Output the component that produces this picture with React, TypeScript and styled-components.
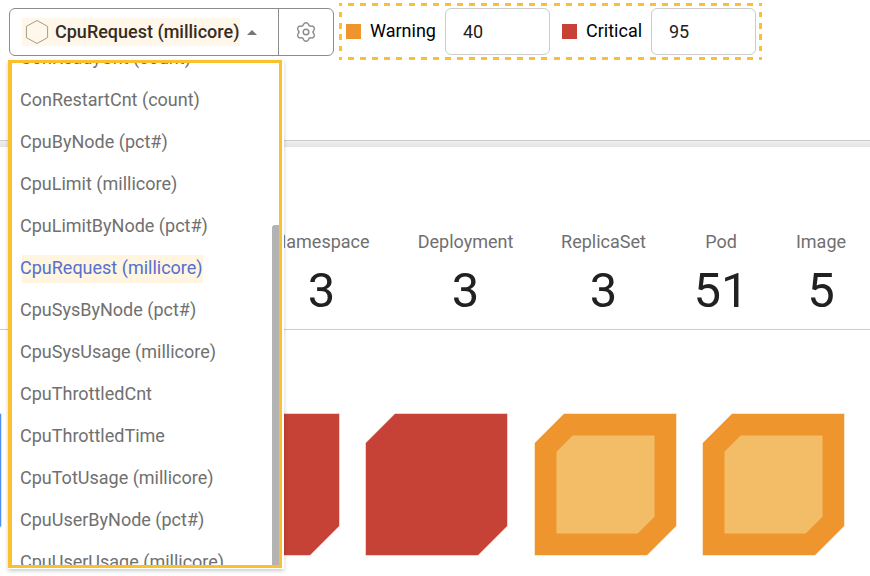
import React from "react";
import styled, { createGlobalStyle, css } from "styled-components";

const GOLD = "#fbc02d";

const GlobalStyle = createGlobalStyle`
  * { box-sizing: border-box; }
  body {
    margin: 0;
    background: #fff;
    color: #000;
    font-family: Roboto, "Liberation Sans", sans-serif;
    font-size: 18px;
  }
`;

const Page = styled.main`
  position: relative;
  width: 870px;
  height: 576px;
  overflow: hidden;
`;

const Toolbar = styled.header`
  display: flex;
  align-items: flex-start;
  height: 140px;
  padding: 3px 0 0 9px;
`;

const MetricControl = styled.div`
  display: flex;
  width: 325px;
  height: 48px;
  margin: 5px 5px 0 0;
  border: 1px solid #8c8c8c;
  border-radius: 6px;
`;

const MetricButton = styled.button`
  display: flex;
  align-items: center;
  flex: 1;
  padding: 0 0 0 12px;
  border: 0;
  background: none;
  color: #352d1e;
  font: 500 18px/28px Roboto, sans-serif;
`;

const SelectedMetric = styled.span`
  display: flex;
  align-items: center;
  width: 218px;
  height: 28px;
  padding-left: 3px;
  background: #fff8ea;
  white-space: nowrap;
`;

const MetricName = styled.span`
  margin-left: 6px;
`;

const CaretIcon = styled.svg`
  margin-left: 7px;
`;

const SettingsButton = styled.button`
  display: flex;
  align-items: center;
  justify-content: center;
  width: 55px;
  padding: 0;
  border: 0;
  border-left: 1px solid #8c8c8c;
  background: none;
`;

const Thresholds = styled.div`
  display: flex;
  justify-content: space-between;
  width: 423px;
  height: 57px;
  padding: 5px 6px 0 7px;
  background:
    repeating-linear-gradient(90deg, ${GOLD} 0 3px, transparent 3px 9.086px, ${GOLD} 9.086px 12.086px) 0 0 / 100% 3px no-repeat,
    repeating-linear-gradient(90deg, ${GOLD} 0 3px, transparent 3px 9.086px, ${GOLD} 9.086px 12.086px) 0 100% / 100% 3px no-repeat,
    repeating-linear-gradient(180deg, ${GOLD} 0 2.8px, transparent 2.8px 8.6px, ${GOLD} 8.6px 11.4px) 0 0 / 3px 100% no-repeat,
    repeating-linear-gradient(180deg, ${GOLD} 0 2.8px, transparent 2.8px 8.6px, ${GOLD} 8.6px 11.4px) 100% 0 / 3px 100% no-repeat;
`;

const Threshold = styled.label<{ $width: number }>`
  display: flex;
  width: ${(p) => p.$width}px;
  height: 47px;
`;

const Swatch = styled.span<{ $color: string }>`
  flex: none;
  width: 15px;
  height: 15px;
  margin: 16px 9px 0 0;
  background: ${(p) => p.$color};
`;

const ThresholdName = styled.span`
  flex: 1;
  line-height: 46px;
  white-space: nowrap;
`;

const ThresholdInput = styled.input`
  width: 105px;
  height: 47px;
  padding: 0 17px;
  border: 1px solid #ccc;
  border-radius: 6px;
  background: #fff;
  color: #222;
  font: 18px Roboto, sans-serif;
`;

const Splitter = styled.div`
  height: 7px;
  border-top: 1px solid #ccc;
  background: linear-gradient(#efefef, #e4e4e4);
`;

const Summary = styled.section`
  display: grid;
  grid-template-columns: 141px 147px 129px 106px 94px;
  height: 183px;
  padding: 83px 0 0 251px;
  border-bottom: 1px solid #ccc;
`;

const Stat = styled.div`
  display: flex;
  flex-direction: column;
  align-items: center;
`;

const StatName = styled.span`
  color: #707070;
  line-height: 24px;
`;

const StatValue = styled.span`
  margin-top: 8px;
  color: #212121;
  font-size: 49px;
  line-height: 58px;
`;

const Tiles = styled.section`
  display: flex;
  padding-top: 83px;
  margin-left: -141px;
`;

const Tile = styled.svg<{ $gap: number }>`
  flex: none;
  width: 143px;
  height: 143px;
  margin-right: ${(p) => p.$gap}px;
`;

const Menu = styled.div`
  position: absolute;
  top: 60px;
  left: 8px;
  width: 276px;
  height: 509px;
  background: #fff;
  box-shadow: 0 2px 4px rgba(0, 0, 0, 0.2);
`;

const MenuFrame = styled.div`
  display: flex;
  width: 274px;
  height: 508px;
  border: solid ${GOLD};
  border-width: 3px 3px 3px 4px;
  overflow: hidden;
`;

const MenuList = styled.ul`
  flex: 1;
  margin: -26px 0 0;
  padding: 0 0 0 8px;
  list-style: none;
`;

const MenuItem = styled.li<{ $active: boolean }>`
  height: 42px;
  line-height: 42px;
  color: #707070;
  white-space: nowrap;
  ${(p) =>
    p.$active &&
    css`
      color: #5470d0;
      background: linear-gradient(#fff5e0, #fff5e0) 2px 8px / 181px 28px no-repeat;
    `}
`;

const ScrollThumb = styled.div`
  width: 7px;
  margin-top: 162px;
  border-radius: 3px 0 0 0;
  background: #b3b3b3;
`;

const metrics = [
  "ConReadyCnt (count)",
  "ConRestartCnt (count)",
  "CpuByNode (pct#)",
  "CpuLimit (millicore)",
  "CpuLimitByNode (pct#)",
  "CpuRequest (millicore)",
  "CpuSysByNode (pct#)",
  "CpuSysUsage (millicore)",
  "CpuThrottledCnt",
  "CpuThrottledTime",
  "CpuTotUsage (millicore)",
  "CpuUserByNode (pct#)",
  "CpuUserUsage (millicore)",
];

const stats = [
  ["Namespace", "3"],
  ["Deployment", "3"],
  ["ReplicaSet", "3"],
  ["Pod", "51"],
  ["Image", "5"],
];

const tiles = [
  { color: "#4c8ff7", gap: 195 },
  { color: "#c64136", gap: 25 },
  { color: "#c64136", gap: 26 },
  { color: "#ee952d", inner: "#f3bd68", gap: 25 },
  { color: "#ee952d", inner: "#f3bd68", gap: 0 },
];

// Six rounded lobes joined by concave arcs.
const polar = (deg: number) => {
  const a = ((deg - 90) * Math.PI) / 180;
  return `${(11 + 8.1 * Math.cos(a)).toFixed(2)} ${(11 + 8.1 * Math.sin(a)).toFixed(2)}`;
};
const gearPath =
  `M${polar(-17)}` +
  [0, 60, 120, 180, 240, 300]
    .map((d) => `A2.6 2.6 0 0 1 ${polar(d + 17)}A2.6 2.6 0 0 0 ${polar(d + 43)}`)
    .join("") +
  "Z";

export default function App() {
  return (
    <>
      <GlobalStyle />
      <Page>
        <Toolbar>
          <MetricControl>
            <MetricButton>
              <SelectedMetric>
                <svg width="24" height="26" viewBox="0 0 24 26" fill="none" stroke="#a29b8e">
                  <path d="M12 1.5 22.6 7.4V18.6L12 24.5 1.4 18.6V7.4Z" />
                </svg>
                <MetricName>CpuRequest (millicore)</MetricName>
              </SelectedMetric>
              <CaretIcon width="10" height="5" viewBox="0 0 10 5">
                <path d="M0 5 5 0 10 5Z" fill="#777" />
              </CaretIcon>
            </MetricButton>
            <SettingsButton aria-label="Settings">
              <svg width="22" height="22" viewBox="0 0 22 22" fill="none" stroke="#8a8a8a" strokeWidth="1.4" strokeLinejoin="round">
                <path d={gearPath} />
                <circle cx="11" cy="11" r="2.8" />
              </svg>
            </SettingsButton>
          </MetricControl>
          <Thresholds>
            <Threshold $width={204}>
              <Swatch $color="#ee952d" />
              <ThresholdName>Warning</ThresholdName>
              <ThresholdInput defaultValue="40" />
            </Threshold>
            <Threshold $width={194}>
              <Swatch $color="#c64136" />
              <ThresholdName>Critical</ThresholdName>
              <ThresholdInput defaultValue="95" />
            </Threshold>
          </Thresholds>
        </Toolbar>
        <Splitter />
        <Summary>
          {stats.map(([name, value]) => (
            <Stat key={name}>
              <StatName>{name}</StatName>
              <StatValue>{value}</StatValue>
            </Stat>
          ))}
        </Summary>
        <Tiles>
          {tiles.map((t, i) => (
            <Tile key={i} $gap={t.gap} viewBox="0 0 143 143">
              <path d="M30 .5H142.5V113L113 142.5H.5V30Z" fill={t.color} stroke="#fff" strokeOpacity=".5" />
              {t.inner && <path d="M38.7 22.5H120.5V103.7L103.7 120.5H22.5V38.7Z" fill={t.inner} />}
            </Tile>
          ))}
        </Tiles>
        <Menu>
          <MenuFrame>
            <MenuList>
              {metrics.map((m) => (
                <MenuItem key={m} $active={m === "CpuRequest (millicore)"}>
                  {m}
                </MenuItem>
              ))}
            </MenuList>
            <ScrollThumb />
          </MenuFrame>
        </Menu>
      </Page>
    </>
  );
}
